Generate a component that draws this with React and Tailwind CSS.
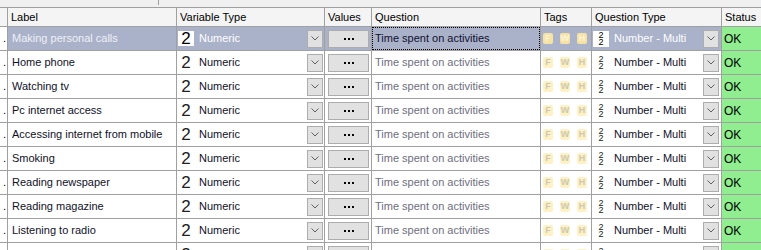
import React from 'react';

const rows = [
  { label: 'Making personal calls', q: 'Time spent on activities' },
  { label: 'Home phone', q: 'Time spent on activities' },
  { label: 'Watching tv', q: 'Time spent on activities' },
  { label: 'Pc internet access', q: 'Time spent on activities' },
  { label: 'Accessing internet from mobile', q: 'Time spent on activities' },
  { label: 'Smoking', q: 'Time spent on activities' },
  { label: 'Reading newspaper', q: 'Time spent on activities' },
  { label: 'Reading magazine', q: 'Time spent on activities' },
  { label: 'Listening to radio', q: 'Time spent on activities' },
  { label: 'Making personal calls', q: 'H: Travel' },
];

const Chevron = () => (
  <svg width="8" height="5" viewBox="0 0 8 5">
    <path d="M0.5 0.5 L4 4 L7.5 0.5" fill="none" stroke="#606060" strokeWidth="1" />
  </svg>
);

const DropBtn = () => (
  <div className="w-[16px] h-[18px] bg-[#e1e1e1] border border-[#adadad] flex items-center justify-center shrink-0">
    <Chevron />
  </div>
);

const Dots = () => (
  <div className="flex gap-[2px]">
    <span className="w-[2px] h-[2px] bg-black" />
    <span className="w-[2px] h-[2px] bg-black" />
    <span className="w-[2px] h-[2px] bg-black" />
  </div>
);

const Tag = ({ letter, sel }) => (
  <div
    className={`w-[10px] h-[11px] rounded-[2px] flex items-center justify-center text-[9px] font-bold leading-none ${
      sel ? 'bg-[#f6e2a2] text-[#fbf4dc]' : 'bg-[#fdf1c6] text-[#cfc8ae]'
    }`}
  >
    {letter}
  </div>
);

const Row = ({ r, sel }) => {
  const base = sel ? 'bg-[#aab2ca]' : 'bg-white';
  const txt = sel ? 'text-[#eef0f6]' : 'text-[#101028]';
  return (
    <div className={`flex h-[24px] border-b border-[#a0a0a0] whitespace-nowrap ${base}`}>
      <div className="w-[8px] shrink-0 border-r border-[#a0a0a0] bg-white flex items-center pl-[3px] text-[11px] text-black">.</div>
      <div className={`w-[169px] shrink-0 border-r border-[#a0a0a0] flex items-center pl-[4px] overflow-hidden text-[11px] ${txt}`}>{r.label}</div>
      <div className="w-[148px] shrink-0 border-r border-[#a0a0a0] flex items-center pl-[1px] pr-[1px]">
        <div className={`w-[16px] h-[15px] flex items-center justify-center text-[17px] leading-none ${sel ? 'bg-white text-black' : 'text-[#202020]'}`}>2</div>
        <span className={`ml-[5px] text-[11px] flex-1 ${sel ? 'text-white' : 'text-[#101028]'}`}>Numeric</span>
        <DropBtn />
      </div>
      <div className="w-[47px] shrink-0 border-r border-[#a0a0a0] flex items-center pl-[3px]">
        <div className="w-[41px] h-[18px] bg-[#e1e1e1] border border-[#adadad] flex items-center justify-center">
          <Dots />
        </div>
      </div>
      <div className="w-[169px] shrink-0 border-r border-[#a0a0a0] flex items-center">
        {sel ? (
          <div className="w-full h-full border border-dotted border-black flex items-center pl-[2px] text-[11px] text-[#101030]">{r.q}</div>
        ) : (
          <span className="pl-[3px] text-[11px] text-[#6e6e80]">{r.q}</span>
        )}
      </div>
      <div className="w-[51px] shrink-0 border-r border-[#a0a0a0] flex items-center pl-[2px] gap-[7px]">
        <Tag letter="F" sel={sel} />
        <Tag letter="W" sel={sel} />
        <Tag letter="H" sel={sel} />
      </div>
      <div className="w-[130px] shrink-0 border-r border-[#a0a0a0] flex items-center pl-[1px] pr-[2px]">
        <div className={`w-[16px] h-[16px] flex flex-col items-center justify-center text-[9px] leading-[7px] ${sel ? 'bg-white text-black' : 'text-[#202020]'}`}>
          <span>2</span>
          <span>2</span>
        </div>
        <span className={`ml-[5px] text-[11px] flex-1 ${sel ? 'text-white' : 'text-[#101028]'}`}>Number - Multi</span>
        <DropBtn />
      </div>
      <div className="flex-1 bg-[#90ee90] flex items-center pl-[2px] text-[12px] text-black">OK</div>
    </div>
  );
};

const Head = ({ w, children, last }) => (
  <div className={`${w} shrink-0 ${last ? 'flex-1' : 'border-r border-[#a0a0a0]'} flex items-center pl-[3px] text-[11px] text-black`}>
    {children}
  </div>
);

export default function App() {
  return (
    <div className="w-[761px] h-[250px] overflow-hidden bg-white font-['Liberation_Sans',Arial,sans-serif]">
      <div className="h-[8px] bg-[#f0f0f0] border-b border-[#a0a0a0] relative">
        <div className="absolute left-[158px] top-0 w-px h-[5px] bg-[#a0a0a0]" />
      </div>
      <div className="flex h-[19px] bg-[#f4f4f4] border-b border-[#a0a0a0]">
        <Head w="w-[8px]"></Head>
        <Head w="w-[169px]">Label</Head>
        <Head w="w-[148px]">Variable Type</Head>
        <Head w="w-[47px]">Values</Head>
        <Head w="w-[169px]">Question</Head>
        <Head w="w-[51px]">Tags</Head>
        <Head w="w-[130px]">Question Type</Head>
        <Head w="" last>Status</Head>
      </div>
      {rows.map((r, i) => (
        <Row key={i} r={r} sel={i === 0} />
      ))}
    </div>
  );
}
